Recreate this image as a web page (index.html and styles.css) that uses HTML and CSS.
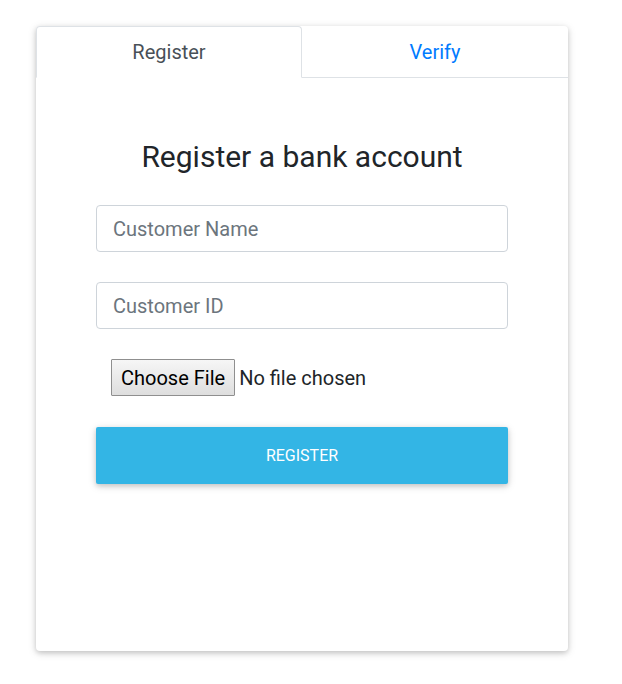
FILE: index.html
```html
<!DOCTYPE html>
<html lang="en">
<head>
<meta charset="utf-8">
<title>Register a bank account</title>
<link rel="stylesheet" href="styles.css">
</head>
<body>
<div class="card">
  <div class="tabs">
    <div class="tab active">Register</div>
    <div class="tab link">Verify</div>
  </div>
  <div class="content">
    <h3 class="title">Register a bank account</h3>
    <form class="form">
      <input class="field" type="text" placeholder="Customer Name">
      <input class="field" type="text" placeholder="Customer ID">
      <div class="file-row"><input class="file" type="file"></div>
      <button class="btn" type="button">Register</button>
    </form>
  </div>
</div>
</body>
</html>
```
FILE: styles.css
```css
* { box-sizing: border-box; }
html, body { margin: 0; background: #fff; }
body {
  min-height: 684px;
  padding: 26px 0 0 36px;
  font-family: Roboto, "Liberation Sans", sans-serif;
  color: #212529;
}
.card {
  width: 532px;
  height: 625px;
  background: #fff;
  border-radius: 4px;
  box-shadow: 0 2px 5px 0 rgba(0,0,0,.16), 0 2px 10px 0 rgba(0,0,0,.12);
  display: flex;
  flex-direction: column;
}
.tabs {
  display: flex;
  height: 52px;
}
.tab {
  flex: 1;
  display: flex;
  align-items: center;
  justify-content: center;
  font-size: 20px;
  border-bottom: 1px solid #dee2e6;
}
.tab.active {
  flex: 0 0 266px;
  color: #495057;
  border: 1px solid #dee2e6;
  border-bottom-color: transparent;
  border-radius: 4px 4px 0 0;
}
.tab.link { color: #007bff; }
.content {
  padding: 0 60px;
}
.title {
  margin: 61px 0 0;
  text-align: center;
  font-size: 30px;
  font-weight: 400;
  line-height: 36px;
  height: 36px;
}
.form {
  display: flex;
  flex-direction: column;
  margin-top: 30px;
}
.field {
  height: 47px;
  padding: 0 16px;
  font-family: inherit;
  font-size: 20px;
  color: #495057;
  border: 1px solid #ced4da;
  border-radius: 4px;
  margin-bottom: 30px;
  outline: none;
}
.field::placeholder { color: #6c757d; }
.file-row {
  padding-left: 15px;
  height: 37px;
  display: flex;
  align-items: center;
}
.file {
  font-family: inherit;
  font-size: 20px;
  color: #212529;
}
.file::file-selector-button {
  font-family: inherit;
  font-size: 20px;
  color: #000;
  height: 37px;
  padding: 0 9px;
  margin-right: 4px;
  border: 1px solid #8f8f8f;
  border-radius: 1px;
  background: linear-gradient(#f6f6f6, #dedede);
}
.btn {
  margin-top: 31px;
  height: 57px;
  border: 0;
  border-radius: 2px;
  background: #33b5e5;
  color: #fff;
  font-family: inherit;
  font-size: 16px;
  text-transform: uppercase;
  box-shadow: 0 2px 5px 0 rgba(0,0,0,.16), 0 2px 10px 0 rgba(0,0,0,.12);
}
```
